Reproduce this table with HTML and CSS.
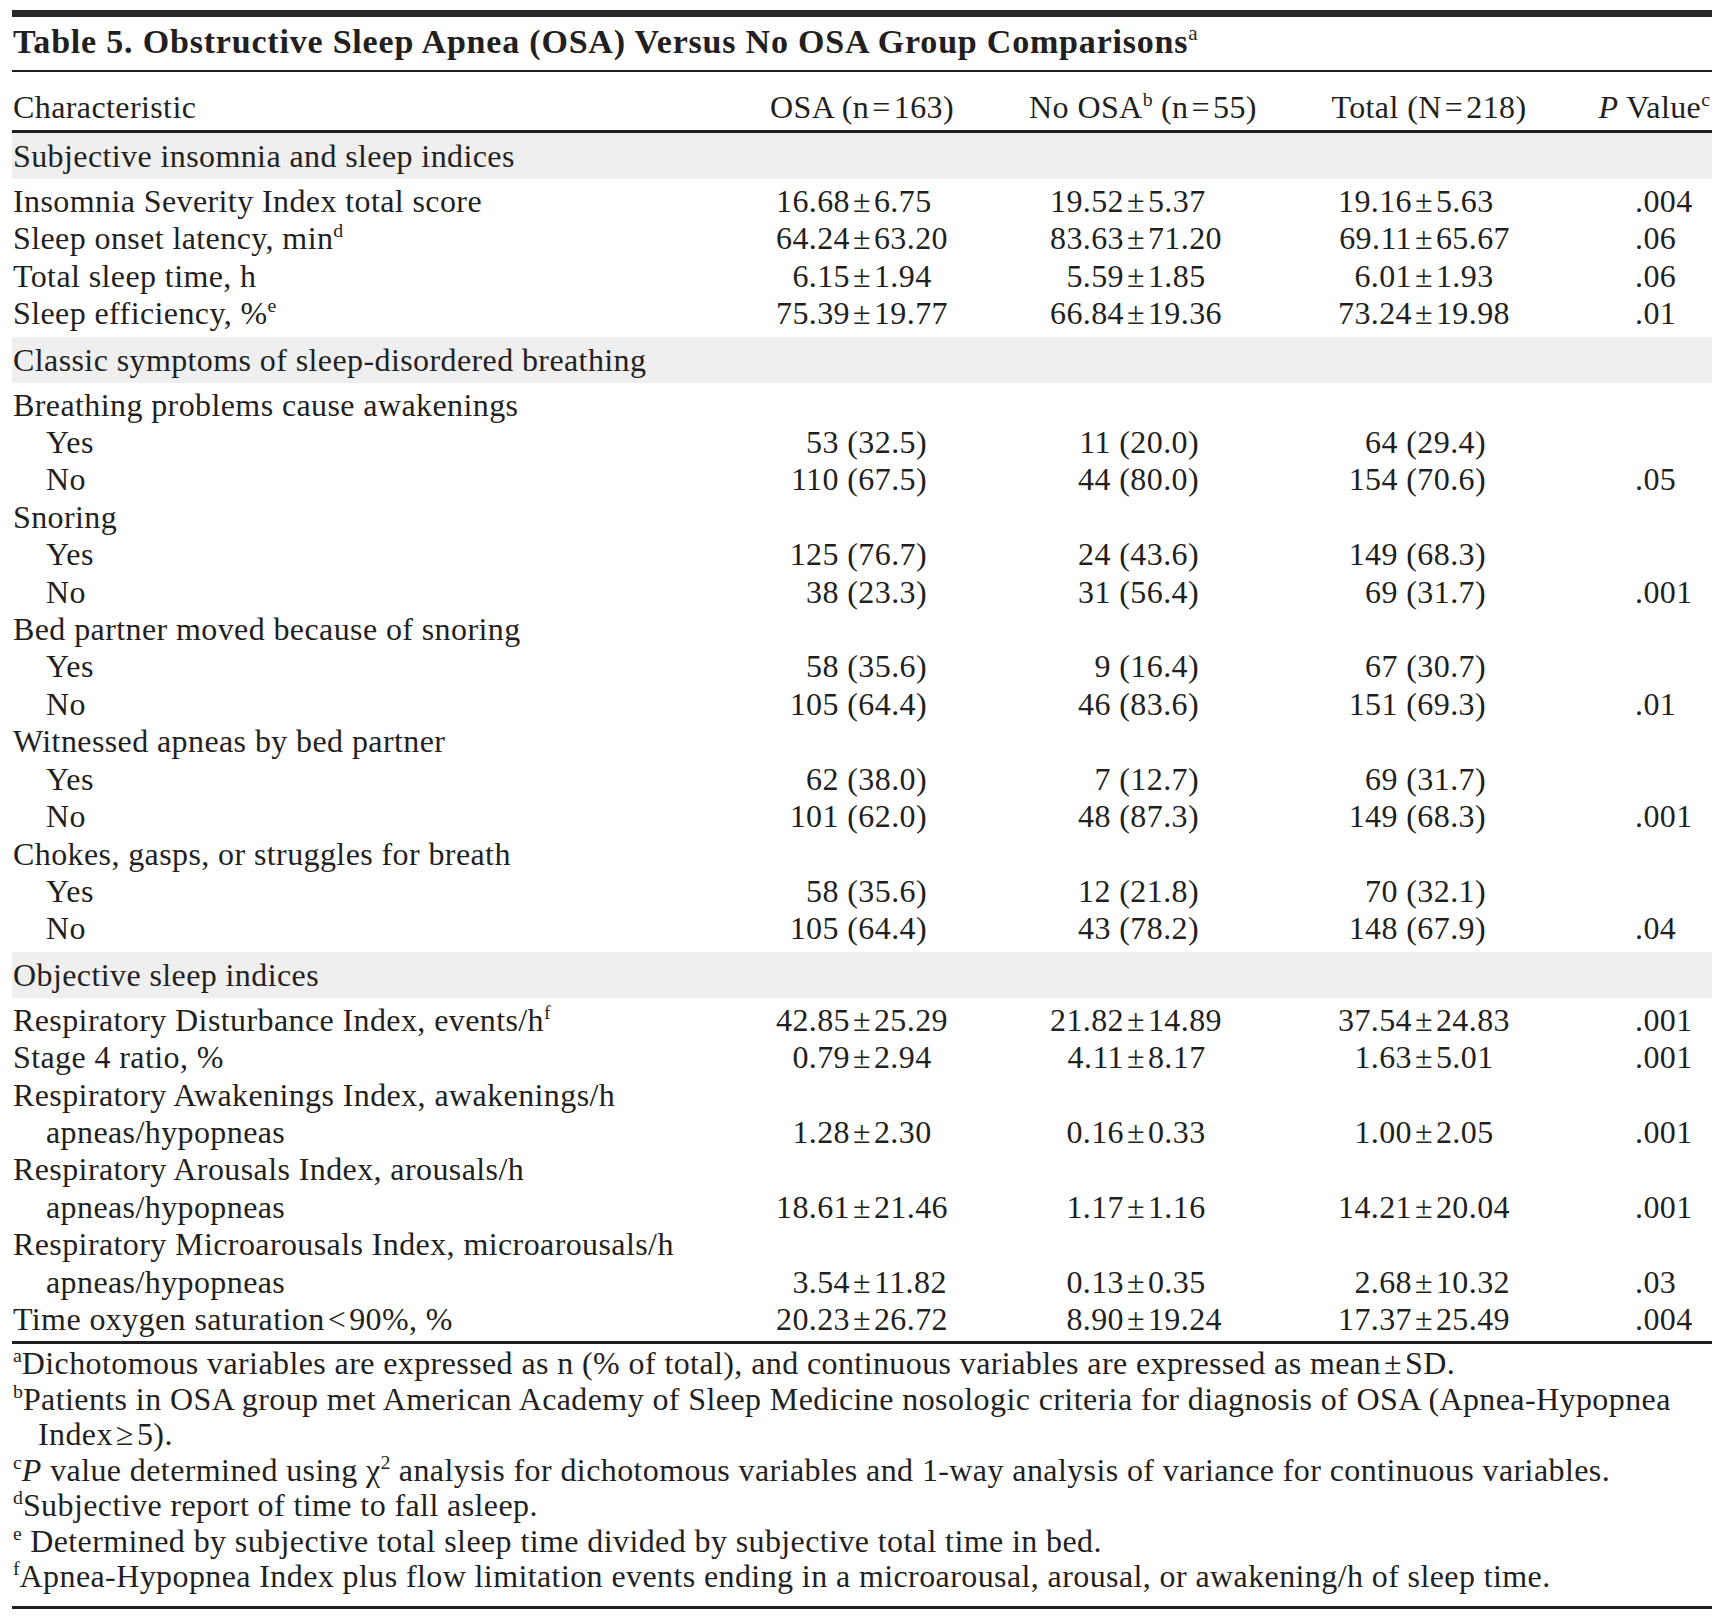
FILE: index.html
```html
<!DOCTYPE html>
<html lang="en">
<head>
<meta charset="utf-8">
<title>Table 5</title>
<link rel="stylesheet" href="styles.css">
</head>
<body>
<div class="page">
  <div class="topbar"></div>
  <h1 class="title">Table 5. Obstructive Sleep Apnea (OSA) Versus No OSA Group Comparisons<sup>a</sup></h1>

  <div class="row head">
    <div class="lab">Characteristic</div>
    <div class="h h1">OSA (n&#8202;=&#8202;163)</div>
    <div class="h h2">No OSA<sup>b</sup> (n&#8202;=&#8202;55)</div>
    <div class="h h3">Total (N&#8202;=&#8202;218)</div>
    <div class="h h4"><i>P</i> Value<sup>c</sup></div>
  </div>

  <div class="section first">Subjective insomnia and sleep indices</div>
  <div class="row">
    <div class="lab">Insomnia Severity Index total score</div>
    <div class="pmc c1"><span class="l">16.68</span><span class="pm">±</span><span class="r">6.75</span></div>
    <div class="pmc c2"><span class="l">19.52</span><span class="pm">±</span><span class="r">5.37</span></div>
    <div class="pmc c3"><span class="l">19.16</span><span class="pm">±</span><span class="r">5.63</span></div>
    <div class="p">.004</div>
  </div>
  <div class="row">
    <div class="lab">Sleep onset latency, min<sup>d</sup></div>
    <div class="pmc c1"><span class="l">64.24</span><span class="pm">±</span><span class="r">63.20</span></div>
    <div class="pmc c2"><span class="l">83.63</span><span class="pm">±</span><span class="r">71.20</span></div>
    <div class="pmc c3"><span class="l">69.11</span><span class="pm">±</span><span class="r">65.67</span></div>
    <div class="p">.06</div>
  </div>
  <div class="row">
    <div class="lab">Total sleep time, h</div>
    <div class="pmc c1"><span class="l">6.15</span><span class="pm">±</span><span class="r">1.94</span></div>
    <div class="pmc c2"><span class="l">5.59</span><span class="pm">±</span><span class="r">1.85</span></div>
    <div class="pmc c3"><span class="l">6.01</span><span class="pm">±</span><span class="r">1.93</span></div>
    <div class="p">.06</div>
  </div>
  <div class="row">
    <div class="lab">Sleep efficiency, %<sup>e</sup></div>
    <div class="pmc c1"><span class="l">75.39</span><span class="pm">±</span><span class="r">19.77</span></div>
    <div class="pmc c2"><span class="l">66.84</span><span class="pm">±</span><span class="r">19.36</span></div>
    <div class="pmc c3"><span class="l">73.24</span><span class="pm">±</span><span class="r">19.98</span></div>
    <div class="p">.01</div>
  </div>

  <div class="section">Classic symptoms of sleep-disordered breathing</div>
  <div class="row"><div class="lab">Breathing problems cause awakenings</div></div>
  <div class="row">
    <div class="lab sub">Yes</div>
    <div class="n c1">53 (32.5)</div><div class="n c2">11 (20.0)</div><div class="n c3">64 (29.4)</div><div class="p"></div>
  </div>
  <div class="row">
    <div class="lab sub">No</div>
    <div class="n c1">110 (67.5)</div><div class="n c2">44 (80.0)</div><div class="n c3">154 (70.6)</div><div class="p">.05</div>
  </div>
  <div class="row"><div class="lab">Snoring</div></div>
  <div class="row">
    <div class="lab sub">Yes</div>
    <div class="n c1">125 (76.7)</div><div class="n c2">24 (43.6)</div><div class="n c3">149 (68.3)</div><div class="p"></div>
  </div>
  <div class="row">
    <div class="lab sub">No</div>
    <div class="n c1">38 (23.3)</div><div class="n c2">31 (56.4)</div><div class="n c3">69 (31.7)</div><div class="p">.001</div>
  </div>
  <div class="row"><div class="lab">Bed partner moved because of snoring</div></div>
  <div class="row">
    <div class="lab sub">Yes</div>
    <div class="n c1">58 (35.6)</div><div class="n c2">9 (16.4)</div><div class="n c3">67 (30.7)</div><div class="p"></div>
  </div>
  <div class="row">
    <div class="lab sub">No</div>
    <div class="n c1">105 (64.4)</div><div class="n c2">46 (83.6)</div><div class="n c3">151 (69.3)</div><div class="p">.01</div>
  </div>
  <div class="row"><div class="lab">Witnessed apneas by bed partner</div></div>
  <div class="row">
    <div class="lab sub">Yes</div>
    <div class="n c1">62 (38.0)</div><div class="n c2">7 (12.7)</div><div class="n c3">69 (31.7)</div><div class="p"></div>
  </div>
  <div class="row">
    <div class="lab sub">No</div>
    <div class="n c1">101 (62.0)</div><div class="n c2">48 (87.3)</div><div class="n c3">149 (68.3)</div><div class="p">.001</div>
  </div>
  <div class="row"><div class="lab">Chokes, gasps, or struggles for breath</div></div>
  <div class="row">
    <div class="lab sub">Yes</div>
    <div class="n c1">58 (35.6)</div><div class="n c2">12 (21.8)</div><div class="n c3">70 (32.1)</div><div class="p"></div>
  </div>
  <div class="row">
    <div class="lab sub">No</div>
    <div class="n c1">105 (64.4)</div><div class="n c2">43 (78.2)</div><div class="n c3">148 (67.9)</div><div class="p">.04</div>
  </div>

  <div class="section">Objective sleep indices</div>
  <div class="row">
    <div class="lab">Respiratory Disturbance Index, events/h<sup>f</sup></div>
    <div class="pmc c1"><span class="l">42.85</span><span class="pm">±</span><span class="r">25.29</span></div>
    <div class="pmc c2"><span class="l">21.82</span><span class="pm">±</span><span class="r">14.89</span></div>
    <div class="pmc c3"><span class="l">37.54</span><span class="pm">±</span><span class="r">24.83</span></div>
    <div class="p">.001</div>
  </div>
  <div class="row">
    <div class="lab">Stage 4 ratio, %</div>
    <div class="pmc c1"><span class="l">0.79</span><span class="pm">±</span><span class="r">2.94</span></div>
    <div class="pmc c2"><span class="l">4.11</span><span class="pm">±</span><span class="r">8.17</span></div>
    <div class="pmc c3"><span class="l">1.63</span><span class="pm">±</span><span class="r">5.01</span></div>
    <div class="p">.001</div>
  </div>
  <div class="row"><div class="lab">Respiratory Awakenings Index, awakenings/h</div></div>
  <div class="row">
    <div class="lab sub">apneas/hypopneas</div>
    <div class="pmc c1"><span class="l">1.28</span><span class="pm">±</span><span class="r">2.30</span></div>
    <div class="pmc c2"><span class="l">0.16</span><span class="pm">±</span><span class="r">0.33</span></div>
    <div class="pmc c3"><span class="l">1.00</span><span class="pm">±</span><span class="r">2.05</span></div>
    <div class="p">.001</div>
  </div>
  <div class="row"><div class="lab">Respiratory Arousals Index, arousals/h</div></div>
  <div class="row">
    <div class="lab sub">apneas/hypopneas</div>
    <div class="pmc c1"><span class="l">18.61</span><span class="pm">±</span><span class="r">21.46</span></div>
    <div class="pmc c2"><span class="l">1.17</span><span class="pm">±</span><span class="r">1.16</span></div>
    <div class="pmc c3"><span class="l">14.21</span><span class="pm">±</span><span class="r">20.04</span></div>
    <div class="p">.001</div>
  </div>
  <div class="row"><div class="lab">Respiratory Microarousals Index, microarousals/h</div></div>
  <div class="row">
    <div class="lab sub">apneas/hypopneas</div>
    <div class="pmc c1"><span class="l">3.54</span><span class="pm">±</span><span class="r">11.82</span></div>
    <div class="pmc c2"><span class="l">0.13</span><span class="pm">±</span><span class="r">0.35</span></div>
    <div class="pmc c3"><span class="l">2.68</span><span class="pm">±</span><span class="r">10.32</span></div>
    <div class="p">.03</div>
  </div>
  <div class="row last">
    <div class="lab">Time oxygen saturation&#8202;&lt;&#8202;90%, %</div>
    <div class="pmc c1"><span class="l">20.23</span><span class="pm">±</span><span class="r">26.72</span></div>
    <div class="pmc c2"><span class="l">8.90</span><span class="pm">±</span><span class="r">19.24</span></div>
    <div class="pmc c3"><span class="l">17.37</span><span class="pm">±</span><span class="r">25.49</span></div>
    <div class="p">.004</div>
  </div>

  <div class="notes">
    <p><sup>a</sup>Dichotomous variables are expressed as n (% of total), and continuous variables are expressed as mean&#8202;±&#8202;SD.</p>
    <p class="hang"><sup>b</sup>Patients in OSA group met American Academy of Sleep Medicine nosologic criteria for diagnosis of OSA (Apnea-Hypopnea<br>Index&#8202;≥&#8202;5).</p>
    <p><sup>c</sup><i>P</i> value determined using χ<sup>2</sup> analysis for dichotomous variables and 1-way analysis of variance for continuous variables.</p>
    <p><sup>d</sup>Subjective report of time to fall asleep.</p>
    <p><sup>e</sup> Determined by subjective total sleep time divided by subjective total time in bed.</p>
    <p><sup>f</sup>Apnea-Hypopnea Index plus flow limitation events ending in a microarousal, arousal, or awakening/h of sleep time.</p>
  </div>
</div>
</body>
</html>
```

FILE: styles.css
```css
html, body {
  margin: 0;
  padding: 0;
  background: #ffffff;
}

body {
  color: #231f20;
  font-family: "Liberation Serif", "Times New Roman", serif;
  font-size: 32px;
  letter-spacing: 0.4px;
}

.page {
  width: 1700px;
  margin-left: 12px;
  padding-top: 10px;
}

.topbar {
  height: 7px;
  background: #2b2a2a;
}

sup {
  font-size: 0.62em;
  line-height: 0;
  vertical-align: 0.6em;
  letter-spacing: 0;
}

.title {
  margin: 0;
  padding: 6px 0 10px 1px;
  font-size: 34px;
  font-weight: bold;
  letter-spacing: 0.8px;
  line-height: 37px;
  border-bottom: 2px solid #231f20;
}

.title sup {
  font-weight: normal;
}

.row {
  display: grid;
  grid-template-columns: 728px 250px 290px 280px 152px;
  line-height: 37.4px;
  white-space: nowrap;
}

.row.head {
  line-height: 37px;
  padding: 17px 0 4px;
  border-bottom: 3px solid #231f20;
}

.lab {
  padding-left: 1px;
}

.lab.sub {
  padding-left: 34px;
}

.h {
  text-align: center;
}

.h1 { padding-right: 6px; }
.h2 { padding-left: 16px; }
.h3 { padding-left: 18px; }
.h4 { text-align: right; padding-right: 2px; }

.section {
  background: #efefef;
  line-height: 37px;
  padding: 5px 0 4px 1px;
  margin: 4px 0;
}

.section.first {
  margin-top: 0;
}

.pmc {
  display: grid;
  grid-template-columns: 110px auto 1fr;
}

.pmc.c2 { grid-template-columns: 134px auto 1fr; }
.pmc.c3 { grid-template-columns: 132px auto 1fr; }

.pmc .l { text-align: right; }
.pmc .pm { margin: 0 3px; }
.pmc .r { text-align: left; }

.n { text-align: right; }
.n.c1 { padding-right: 63px; }
.n.c2 { padding-right: 81px; }
.n.c3 { padding-right: 74px; }

.p {
  padding-left: 75px;
}

.row.last {
  padding-bottom: 3px;
  border-bottom: 3px solid #231f20;
}

.notes {
  padding: 2px 0 11px 1px;
  border-bottom: 3px solid #231f20;
  line-height: 35.5px;
}

.notes p {
  margin: 0;
  white-space: nowrap;
}

.notes p.hang {
  padding-left: 25px;
  text-indent: -25px;
}
```
